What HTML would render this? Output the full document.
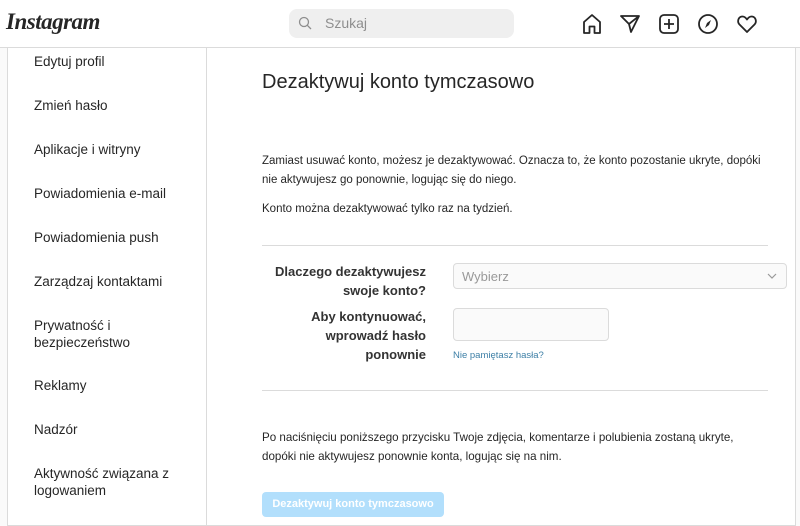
<!DOCTYPE html>
<html><head><meta charset="utf-8"><style>
*{margin:0;padding:0;box-sizing:border-box}
body{width:800px;height:526px;overflow:hidden;background:#fafafa;font-family:"Liberation Sans",sans-serif;color:#262626;position:relative}
.hdr{position:absolute;left:0;top:0;width:800px;height:48px;background:#fff;border-bottom:1px solid #dbdbdb}
.logo{position:absolute;left:6px;top:9px;font-family:"Liberation Serif",serif;font-style:italic;font-size:23px;font-weight:bold;letter-spacing:-0.5px;color:#262626}
.search{position:absolute;left:289px;top:9px;width:225px;height:29px;background:#efefef;border-radius:8px;color:#8e8e8e;font-size:14px;line-height:29px;padding-left:36px}
.search svg{position:absolute;left:9px;top:7px}
.icons svg{position:absolute;top:13px}
.box{position:absolute;left:7px;top:48px;width:789px;height:478px;background:#fff;border:1px solid #dbdbdb;border-top:none}
.side{position:absolute;left:0;top:0;width:199px;height:478px;border-right:1px solid #dbdbdb}
.side div{position:absolute;left:26px;font-size:13.5px;line-height:17px;color:#262626}
.t{position:absolute;white-space:nowrap}
.p{color:#262626;line-height:19px}
.hr{position:absolute;left:262px;width:506px;height:1px;background:#dbdbdb}
.lab{position:absolute;right:374px;text-align:right;font-size:13px;font-weight:bold;line-height:19px;white-space:nowrap;color:#333}
.inp{position:absolute;background:#fafafa;border:1px solid #dbdbdb;border-radius:4px}
</style></head><body>
<div class="hdr">
<div class="logo">Instagram</div>
<div class="search"><svg width="14" height="14" viewBox="0 0 14 14"><circle cx="6" cy="6" r="4.5" fill="none" stroke="#8e8e8e" stroke-width="1.3"/><path d="M9.3 9.3L13 13" stroke="#8e8e8e" stroke-width="1.3"/></svg>Szukaj</div>
<div class="icons">
<svg style="left:581px" width="22" height="22" viewBox="0 0 22 22"><path d="M3 9L11 2L19 9V20H13.5V13.5H8.5V20H3Z" fill="none" stroke="#262626" stroke-width="1.8" stroke-linejoin="round"/></svg>
<svg style="left:619px" width="22" height="22" viewBox="0 0 22 22"><path d="M2 3H20L12 19L10 11Z M10 11L20 3" fill="none" stroke="#262626" stroke-width="1.8" stroke-linejoin="round"/></svg>
<svg style="left:658px" width="22" height="22" viewBox="0 0 22 22"><rect x="2" y="2" width="18" height="18" rx="4" fill="none" stroke="#262626" stroke-width="1.8"/><path d="M11 6V16M6 11H16" stroke="#262626" stroke-width="1.8"/></svg>
<svg style="left:697px" width="22" height="22" viewBox="0 0 22 22"><circle cx="11" cy="11" r="9" fill="none" stroke="#262626" stroke-width="1.8"/><path d="M14 7L12 12L8 15L10 10Z" fill="#262626"/></svg>
<svg style="left:736px" width="22" height="22" viewBox="0 0 22 22"><path d="M11 19L3.5 11.5C1 9 2 4 6 3.5C8.5 3.2 10 5 11 6.5C12 5 13.5 3.2 16 3.5C20 4 21 9 18.5 11.5Z" fill="none" stroke="#262626" stroke-width="1.8" stroke-linejoin="round"/></svg>
</div>
</div>
<div class="box">
<div class="side">
<div style="top:5px">Edytuj profil</div>
<div style="top:49px">Zmień hasło</div>
<div style="top:93px">Aplikacje i witryny</div>
<div style="top:137px">Powiadomienia e-mail</div>
<div style="top:181px">Powiadomienia push</div>
<div style="top:225px">Zarządzaj kontaktami</div>
<div style="top:269px">Prywatność i<br>bezpieczeństwo</div>
<div style="top:329px">Reklamy</div>
<div style="top:373px">Nadzór</div>
<div style="top:417px">Aktywność związana z<br>logowaniem</div>
</div>
</div>
<div class="t" style="left:262px;top:71px;font-size:20px;color:#262626">Dezaktywuj konto tymczasowo</div>
<div class="t p" style="left:262px;top:152px;font-size:11.5px">Zamiast usuwać konto, możesz je dezaktywować. Oznacza to, że konto pozostanie ukryte, dopóki<br>nie aktywujesz go ponownie, logując się do niego.</div>
<div class="t p" style="left:262px;top:200px;font-size:11.5px">Konto można dezaktywować tylko raz na tydzień.</div>
<div class="hr" style="top:245px"></div>
<div class="lab" style="top:262px">Dlaczego dezaktywujesz<br>swoje konto?</div>
<div class="inp" style="left:453px;top:263px;width:334px;height:26px;font-size:13px;color:#999;line-height:26px;padding-left:8px">Wybierz<svg style="position:absolute;right:9px;top:9px" width="10" height="7" viewBox="0 0 10 7"><path d="M1 1L5 5L9 1" fill="none" stroke="#999" stroke-width="1.2"/></svg></div>
<div class="lab" style="top:307px">Aby kontynuować,<br>wprowadź hasło<br>ponownie</div>
<div class="inp" style="left:453px;top:308px;width:156px;height:33px"></div>
<div class="t" style="left:453px;top:350px;font-size:9.5px;color:#3d7fa6">Nie pamiętasz hasła?</div>
<div class="hr" style="top:390px"></div>
<div class="t p" style="left:262px;top:428px;font-size:11.6px">Po naciśnięciu poniższego przycisku Twoje zdjęcia, komentarze i polubienia zostaną ukryte,<br>dopóki nie aktywujesz ponownie konta, logując się na nim.</div>
<div class="t" style="left:262px;top:492px;width:182px;height:25px;background:#b2dffc;border-radius:4px;color:#fff;font-size:11px;font-weight:bold;text-align:center;line-height:25px">Dezaktywuj konto tymczasowo</div>
</body></html>
